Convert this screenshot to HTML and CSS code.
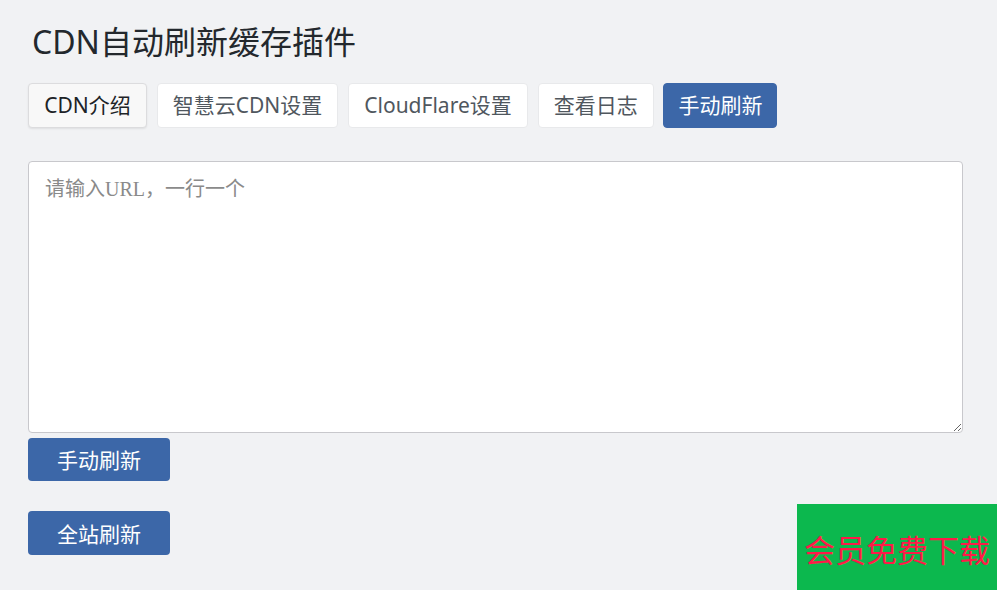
FILE: index.html
```html
<!DOCTYPE html>
<html lang="zh-CN">
<head>
<meta charset="utf-8">
<title>CDN自动刷新缓存插件</title>
<link rel="stylesheet" href="styles.css">
</head>
<body>
<div class="wrap">
  <h1 class="title">CDN自动刷新缓存插件</h1>
  <nav class="tabs">
    <a class="tab tab-hover">CDN介绍</a>
    <a class="tab">智慧云CDN设置</a>
    <a class="tab">CloudFlare设置</a>
    <a class="tab">查看日志</a>
    <a class="tab tab-active">手动刷新</a>
  </nav>
  <form class="refresh-form">
    <textarea class="urls" placeholder="请输入URL，一行一个"></textarea>
    <button type="button" class="btn">手动刷新</button>
    <button type="button" class="btn btn-all">全站刷新</button>
  </form>
</div>
<div class="promo">会员免费下载</div>
</body>
</html>
```
FILE: styles.css
```css
html, body {
  margin: 0;
  padding: 0;
  background: #f1f2f4;
  height: 100%;
}
body {
  font-family: "Noto Sans", "Noto Sans CJK SC", sans-serif;
  color: #1d2327;
}
.wrap {
  padding: 20px 0 0 28px;
}
.title {
  margin: 0 0 0 4px;
  font-size: 32px;
  font-weight: 400;
  line-height: 44px;
  height: 44px;
  color: #23282d;
}
.tabs {
  display: flex;
  gap: 9.6px;
  margin-top: 19px;
}
.tab {
  display: block;
  height: 45px;
  box-sizing: border-box;
  padding: 0 15.2px;
  line-height: 43px;
  font-size: 21px;
  color: #50575e;
  background: #ffffff;
  border: 1px solid #e8e9eb;
  border-radius: 4px;
  white-space: nowrap;
}
.tab-hover {
  background: #f8f8f8;
  color: #1d2327;
  border-color: #dcdcde;
  box-shadow: 0 1px 2px rgba(0,0,0,0.08);
}
.tab-active {
  background: #3c67a8;
  border-color: #3c67a8;
  color: #ffffff;
  padding: 0 14px;
}
.refresh-form {
  margin-top: 33px;
  display: flex;
  flex-direction: column;
  align-items: flex-start;
}
.urls {
  display: block;
  box-sizing: border-box;
  width: 935px;
  height: 272px;
  margin: 0;
  padding: 13px 16px;
  font-family: "Liberation Serif", "Noto Sans CJK SC", serif;
  font-size: 20px;
  line-height: 28px;
  background: #ffffff;
  border: 1px solid #c8c8cc;
  border-radius: 4px;
  color: #2c3338;
}
.urls::placeholder {
  color: #8a8a8a;
}
.btn {
  display: block;
  width: 142px;
  height: 43px;
  margin-top: 5px;
  padding: 0;
  border: none;
  border-radius: 4px;
  background: #3c67a8;
  color: #ffffff;
  font-family: "Noto Sans CJK SC", sans-serif;
  font-size: 21px;
  line-height: 43px;
}
.btn-all {
  margin-top: 30px;
  height: 44px;
}
.promo {
  position: fixed;
  right: 0;
  bottom: 0;
  width: 200px;
  height: 86px;
  background: #0cb84e;
  color: #ff1a48;
  font-family: "Noto Sans CJK SC", sans-serif;
  font-size: 31px;
  line-height: 90px;
  text-align: center;
}
```
